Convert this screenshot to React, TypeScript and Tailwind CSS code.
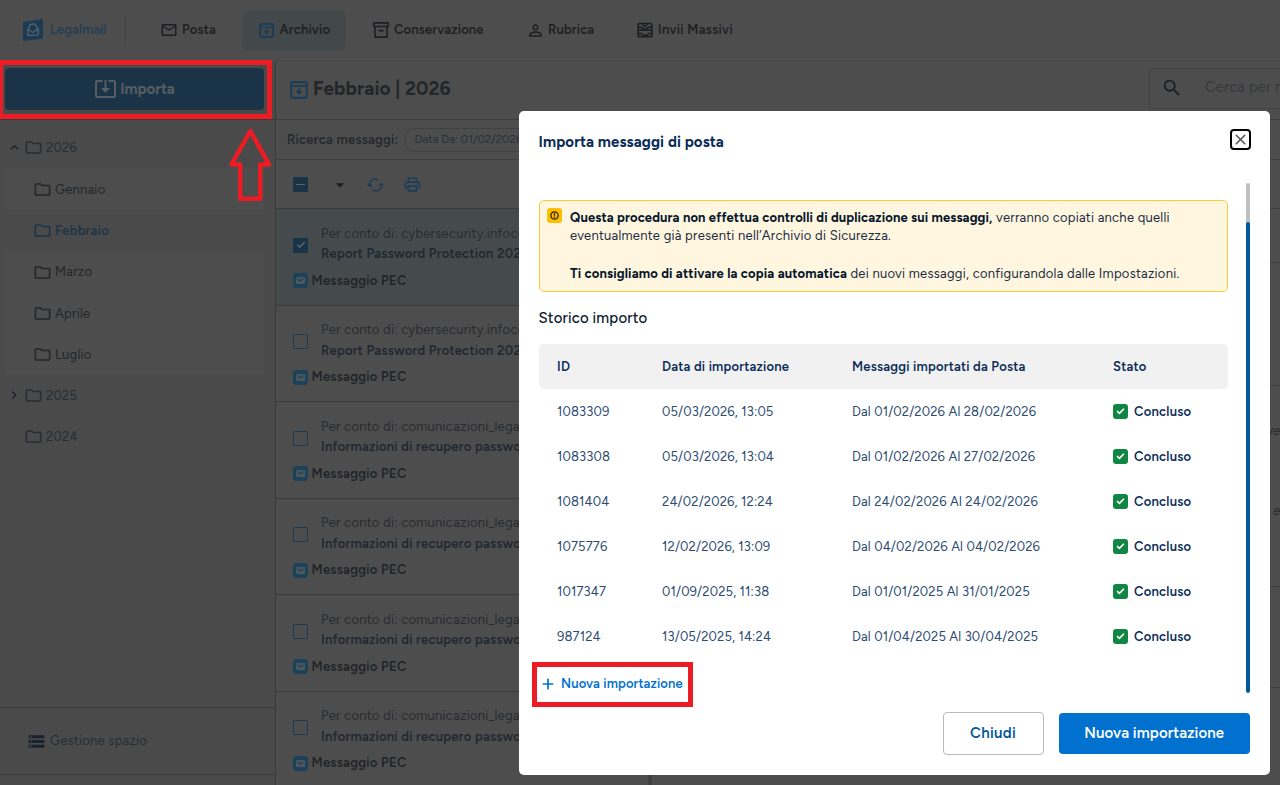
import { Check, Plus, X } from "lucide-react";
import {
  MdArrowDropDown,
  MdExpandLess,
  MdChevronRight,
  MdOutlineFolder,
  MdOutlineMail,
  MdOutlinePrint,
  MdPersonOutline,
  MdSearch,
  MdStorage,
} from "react-icons/md";

const months = ["Gennaio", "Febbraio", "Marzo", "Aprile", "Luglio"];

const cyber = { from: "cybersecurity.infocert", subject: "Report Password Protection 2026" };
const recovery = { from: "comunicazioni_legalmail", subject: "Informazioni di recupero password" };
const messages = [cyber, cyber, recovery, recovery, recovery, recovery];

const imports = [
  { id: "1083309", date: "05/03/2026, 13:05", range: "Dal 01/02/2026 Al 28/02/2026" },
  { id: "1083308", date: "05/03/2026, 13:04", range: "Dal 01/02/2026 Al 27/02/2026" },
  { id: "1081404", date: "24/02/2026, 12:24", range: "Dal 24/02/2026 Al 24/02/2026" },
  { id: "1075776", date: "12/02/2026, 13:09", range: "Dal 04/02/2026 Al 04/02/2026" },
  { id: "1017347", date: "01/09/2025, 11:38", range: "Dal 01/01/2025 Al 31/01/2025" },
  { id: "987124", date: "13/05/2025, 14:24", range: "Dal 01/04/2025 Al 30/04/2025" },
];

function ArchiveDownIcon({ className }: { className?: string }) {
  return (
    <svg viewBox="0 0 18 18" fill="none" stroke="currentColor" className={className}>
      <rect x="1.2" y="1.2" width="15.6" height="15.6" rx="1.8" strokeWidth="2.2" />
      <path d="M1.5 5h15" strokeWidth="1.8" />
      <path d="M9 7.2v4" strokeWidth="2.4" />
      <path d="M5.2 10h7.6L9 14z" fill="currentColor" stroke="none" />
    </svg>
  );
}

function BoxIcon() {
  return (
    <svg viewBox="0 0 16 16" fill="none" stroke="currentColor" strokeWidth="1.6" className="h-4 w-4">
      <path d="M.9.9h14.2v3.6H.9zM2 4.5v10.6h12V4.5M5.5 8.6h5" />
    </svg>
  );
}

function TrayIcon() {
  return (
    <svg viewBox="0 0 16 16" fill="none" stroke="currentColor" strokeWidth="1.7" strokeLinejoin="round" className="h-4 w-4">
      <rect x="1.2" y="1.5" width="13.6" height="13.2" rx="1" />
      <path d="M1 8.1h14" />
      <path d="M1.2 5.3h3.3l1.7 1.3h3.600l1.700-1.300h3.300M5 2l3 2.300L11 2" strokeWidth="1.5" />
      <path d="M1.2 11.5h3l1.800 1.700h4l1.800-1.700h3" strokeWidth="1.5" />
    </svg>
  );
}

function Logo() {
  return (
    <svg viewBox="0 0 20 24" className="h-6 w-5">
      <path d="M0 4 20 1v19.5L0 23z" fill="#1b3a54" />
      <g fill="none" stroke="#525d66" strokeWidth="1.4">
        <path d="M6.2 11V9.500c0-4.600 7.600-4.600 7.600 0V11" />
        <path d="M4.7 11.2v6.300l10.600-.6v-6.200l-5.300 3.800z" />
      </g>
    </svg>
  );
}

function ImportIcon() {
  return (
    <svg viewBox="0 0 21 18" fill="none" stroke="currentColor" strokeWidth="2" className="h-[18px] w-[21px]">
      <path d="M7.500 1H2a1 1 0 0 0-1 1v14a1 1 0 0 0 1 1h17a1 1 0 0 0 1-1V2a1 1 0 0 0-1-1h-5.500" />
      <path d="M10.500 0v9" />
      <path d="M6 8h9l-4.500 5z" fill="currentColor" stroke="none" />
    </svg>
  );
}

function RefreshIcon() {
  return (
    <svg viewBox="0 0 17 14" fill="none" stroke="currentColor" strokeWidth="1.6" className="h-3.5 w-[17px]">
      <path d="M2.8 8.500A5.600 5.600 0 0 1 11.500 2.300M14.200 5.500A5.600 5.600 0 0 1 5.500 11.700" />
      <path d="M0 6.2h5.600L2.800 9.400zM11.400 7.800H17l-2.800-3.200z" fill="currentColor" stroke="none" />
    </svg>
  );
}

function PecIcon() {
  return (
    <span className="flex h-[15px] w-[15px] shrink-0 items-center justify-center rounded-[3.5px] bg-[#1b4259]">
      <svg viewBox="0 0 9 7" className="h-[7px] w-[9px]">
        <rect width="9" height="7" rx="1" fill="#4d575d" />
        <path d="M1.500 1.800 4.500 4l3-2.200" stroke="#1b4259" fill="none" strokeWidth="1.200" />
      </svg>
    </span>
  );
}

function Header() {
  return (
    <header className="flex h-[61px] shrink-0 items-center border-b border-[#484848] text-[13px] font-semibold tracking-[0.17px] text-[#1d1f22]">
      <div className="ml-[23px] flex h-7 w-[103px] items-center gap-[7px] border-r border-[#3f4142] text-[#1e3d56]">
        <Logo />
        <span className="font-medium">Legalmail</span>
      </div>
      <nav className="flex items-center">
        <div className="ml-[34px] flex w-[82px] items-center gap-1">
          <MdOutlineMail className="h-[18px] w-[18px]" />
          Posta
        </div>
        <div className="flex h-[41px] w-[104px] items-center gap-[5.5px] rounded-lg bg-[#43484a] pl-[17px]">
          <ArchiveDownIcon className="h-[15px] w-[15px] text-[#1c3d56]" />
          Archivio
        </div>
        <div className="ml-[27px] flex w-[155px] items-center gap-[5px]">
          <BoxIcon />
          Conservazione
        </div>
        <div className="flex w-[109px] items-center gap-[3px]">
          <MdPersonOutline className="-ml-0.5 h-[19px] w-[19px]" />
          Rubrica
        </div>
        <div className="flex items-center gap-[5px] tracking-[0.3px]">
          <TrayIcon />
          Invii Massivi
        </div>
      </nav>
    </header>
  );
}

function Sidebar() {
  return (
    <aside className="flex w-[276px] shrink-0 flex-col border-r border-[#3a3a3a] bg-[#4a4a4a] text-[13px] tracking-[0.25px] text-[#262d35]">
      <div className="h-[59px] shrink-0 border-b border-[#3a3a3a] pl-[5px] pt-[7px]">
        <button className="flex h-[42px] w-[259px] items-center justify-center gap-1 rounded bg-[#1b3347] pl-px text-[15px] font-bold tracking-normal text-[#565d63]">
          <ImportIcon />
          Importa
        </button>
      </div>
      <div className="flex grow flex-col pt-[7px]">
        <div className="flex h-[41.4px] items-center pl-1.5">
          <MdExpandLess className="h-[17px] w-[17px] text-[#1e2327]" />
          <MdOutlineFolder className="ml-px mr-[3px] h-[19px] w-[19px]" />
          2026
        </div>
        <div className="ml-[5px] w-[259px] bg-[#4d4d4d] text-[#222629]">
          {months.map((month) => (
            <div
              key={month}
              className={
                month === "Febbraio"
                  ? "flex h-[41.3px] items-center bg-[#4a4a4a] pl-7 pt-px font-semibold text-[#1d3447]"
                  : "flex h-[41.3px] items-center pl-7 pt-px"
              }
            >
              <MdOutlineFolder className="mr-[3px] h-[19px] w-[19px]" />
              {month}
            </div>
          ))}
        </div>
        <div className="flex h-[41px] items-center pl-1.5">
          <MdChevronRight className="h-[18px] w-4 text-[#15202b]" />
          <MdOutlineFolder className="ml-[2px] mr-[3px] h-[19px] w-[19px]" />
          2025
        </div>
        <div className="flex h-[41px] items-center pl-6">
          <MdOutlineFolder className="mr-[3px] h-[19px] w-[19px]" />
          2024
        </div>
      </div>
      <div className="flex h-[68px] items-center border-y border-[#3c3c3c] pl-[27px]">
        <MdStorage className="mr-1 h-[19px] w-[19px] text-[#17222e]" />
        Gestione spazio
      </div>
      <div className="h-2.5" />
    </aside>
  );
}

function MessageList() {
  return (
    <section className="w-[372px] shrink-0">
      <div className="flex h-10 items-center whitespace-nowrap border-b border-[#3e3e3e] pl-[11px] text-[13px] font-semibold tracking-[0.25px] text-[#25282c]">
        Ricerca messaggi:
        <span className="ml-[7px] flex h-6 items-center rounded-lg border border-[#414141] px-2 text-[11.5px] font-normal tracking-normal text-[#292f36]">
          Data Da: 01/02/2026
        </span>
      </div>
      <div className="flex h-[49px] items-center border-b border-[#3a3a3a] pl-[17px] pt-px text-[#1b3d57]">
        <span className="flex h-[15px] w-[15px] items-center justify-center rounded-[1px] bg-[#1b3347]">
          <span className="h-[1.5px] w-[9px] bg-[#5b6369]" />
        </span>
        <MdArrowDropDown className="ml-[22px] h-5 w-5 text-[#1c1e20]" />
        <span className="ml-[17px]">
          <RefreshIcon />
        </span>
        <MdOutlinePrint className="ml-[19px] h-[19px] w-[19px]" />
      </div>
      {messages.map((message, index) => (
        <article
          key={index}
          className={
            index === 0
              ? "h-[96.6px] border-b border-[#393b3c] bg-[#454b4c] pl-[17px] pt-[14.5px]"
              : "h-[96.6px] border-b border-[#393939] pl-[17px] pt-[14.5px]"
          }
        >
          <div className="flex items-center gap-[13px]">
            {index === 0 ? (
              <span className="mt-0.5 flex h-[15px] w-[15px] shrink-0 items-center justify-center rounded-[1px] bg-[#1b3347] text-[#667078]">
                <Check className="h-2.5 w-2.5" strokeWidth={3} />
              </span>
            ) : (
              <span className="mt-0.5 h-[15px] w-[15px] shrink-0 rounded-[1px] border border-[#1e3b51]" />
            )}
            <div className="w-[310px] overflow-hidden whitespace-nowrap text-[13px] leading-[20.5px] tracking-[0.25px]">
              <p className="text-[#282b2f]">Per conto di: {message.from}</p>
              <p className="font-semibold text-[#1f2730]">{message.subject}</p>
            </div>
          </div>
          <div className="mt-[6px] flex items-center gap-[3.5px] text-[13px] font-semibold leading-5 tracking-[0.3px] text-[#202327]">
            <PecIcon />
            Messaggio PEC
          </div>
        </article>
      ))}
    </section>
  );
}

function ImportDialog() {
  return (
    <div className="absolute left-[519px] top-[111px] flex h-[664px] w-[750.5px] flex-col rounded-[5px] bg-white pl-[19.5px] pr-[19.5px]">
      <div className="flex h-[72px] shrink-0 items-start justify-between pt-[18px]">
        <h2 className="pt-[3px] text-[15px] font-bold leading-5 tracking-[0.13px] text-[#0a2c57]">
          Importa messaggi di posta
        </h2>
        <button className="-mr-px flex h-[21px] w-[21px] items-center justify-center rounded border-2 border-black text-[#555]">
          <X className="h-[17px] w-[17px] shrink-0" strokeWidth={2.2} />
        </button>
      </div>
      <div className="flex h-[510px] shrink-0 justify-between">
        <div className="w-[689px]">
          <div className="mt-[17px] flex h-[92px] gap-2 rounded-[5px] border border-[#ffc93c] bg-[#fff6e0] pl-[7px] pt-[7px]">
            <span className="flex h-[15px] w-[15px] shrink-0 items-center justify-center rounded-[3px] bg-[#ffbe00]">
              <svg viewBox="0 0 9 9" fill="none" stroke="#2b2200" className="h-[9px] w-[9px]">
                <circle cx="4.5" cy="4.5" r="3.7" strokeWidth="1.3" />
                <path d="M4.5 2.3v2.4M4.5 5.5v1.2" strokeWidth="1.3" />
              </svg>
            </span>
            <div className="whitespace-nowrap pl-[0.5px] pt-[0.5px] text-[13px] leading-[18.7px] tracking-[0.25px] text-[#1b2c40]">
              <p>
                <strong className="tracking-[0.13px] text-[#07172b]">
                  Questa procedura non effettua controlli di duplicazione sui messaggi,
                </strong>{" "}
                verranno copiati anche quelli
              </p>
              <p>eventualmente già presenti nell’Archivio di Sicurezza.</p>
              <p className="mt-[18.7px]">
                <strong className="tracking-[0.15px] text-[#07172b]">
                  Ti consigliamo di attivare la copia automatica
                </strong>{" "}
                dei nuovi messaggi, configurandola dalle Impostazioni.
              </p>
            </div>
          </div>
          <h3 className="mt-4 text-[15px] font-medium leading-5 tracking-[0.15px] text-[#0b1a2e]">Storico importo</h3>
          <div className="mt-4 grid h-[45px] grid-cols-[105px_190px_261px_1fr] items-center rounded-[5px] bg-[#f1f1f1] pl-[18.5px] text-[13px] font-semibold tracking-[0.22px] text-[#0a2c57]">
            <span>ID</span>
            <span>Data di importazione</span>
            <span>Messaggi importati da Posta</span>
            <span>Stato</span>
          </div>
          {imports.map((row) => (
            <div
              key={row.id}
              className="grid h-[45px] grid-cols-[105px_190px_261px_1fr] items-center pl-[18.5px] text-[13px] tracking-[0.13px] text-[#2a4a70]"
            >
              <span>{row.id}</span>
              <span>{row.date}</span>
              <span>{row.range}</span>
              <span className="flex items-center gap-1.5 font-semibold tracking-[0.25px] text-[#0a2c57]">
                <span className="flex h-[15px] w-[15px] items-center justify-center rounded-[3px] bg-[#0f8742] text-white">
                  <Check className="h-[9px] w-[9px]" strokeWidth={4.5} />
                </span>
                Concluso
              </span>
            </div>
          ))}
          <button className="-ml-[6.5px] mt-[3px] flex h-[45px] w-[160.5px] items-center gap-[5px] whitespace-nowrap border-[5px] border-[#ed1c24] pb-0.5 pl-[3px] text-[13px] font-semibold tracking-[0.13px] text-[#0071cf]">
            <Plus className="h-4 w-4" strokeWidth={2.5} />
            Nuova importazione
          </button>
        </div>
        <div className="flex w-1 flex-col overflow-hidden rounded-sm bg-[#bfbfbf] pt-[39px]">
          <div className="grow rounded-sm bg-[#00589f]" />
        </div>
      </div>
      <div className="mt-[19px] flex items-center justify-end gap-[15px] text-[15px] font-semibold tracking-[0.12px]">
        <button className="h-[43px] w-[101px] rounded border border-[#b9b9b9] tracking-[0.3px] text-[#00569c]">
          Chiudi
        </button>
        <button className="h-[41px] w-[191.5px] rounded bg-[#0071cf] text-white">Nuova importazione</button>
      </div>
    </div>
  );
}

export default function App() {
  return (
    <div className="relative flex h-[785px] w-[1280px] flex-col overflow-hidden bg-[#4d4d4d] font-['Figtree','Inter',sans-serif]">
      <Header />
      <div className="flex min-h-0 grow">
        <Sidebar />
        <main className="flex min-w-0 grow flex-col">
          <div className="flex h-[59px] shrink-0 items-center border-b border-[#3e3e3e] pl-[14px]">
            <ArchiveDownIcon className="mb-px h-[18px] w-[18px] text-[#1c3d56]" />
            <h1 className="mb-px ml-[5px] text-[19px] font-bold tracking-[0.1px] text-[#222529]">Febbraio | 2026</h1>
            <div className="mb-1 ml-auto flex h-[41px] w-[131px] items-center overflow-hidden whitespace-nowrap rounded-l border border-r-0 border-[#424242] pl-[11px] text-[14.5px] tracking-[0.3px] text-[#35383b]">
              <MdSearch className="mr-[22px] h-[22px] w-[22px] shrink-0 text-[#15202b]" />
              Cerca per mittente
            </div>
          </div>
          <div className="flex min-h-0 grow">
            <MessageList />
            <div className="w-1 shrink-0 bg-[#414141]" />
            <div className="grow">
              <div className="h-10 border-b border-[#3e3e3e]" />
              <div className="h-[49px] border-b border-[#3e3e3e]" />
              <div className="h-[54px] border-b border-[#3e3e3e]" />
              <div className="h-[123px] border-b border-[#3e3e3e]" />
              <div className="flex h-[201px] flex-col items-end border-b border-[#3e3e3e] text-[12.5px] italic leading-[18px] text-[#25282c]">
                <span className="mt-9">ve</span>
                <span className="mt-[62px]">a e</span>
              </div>
              <div className="h-[101px] border-b border-[#3e3e3e]" />
            </div>
          </div>
        </main>
      </div>

      <ImportDialog />

      {/* Highlight around the import button, with its arrow */}
      <div className="pointer-events-none absolute -left-0.5 top-[60px] h-[59px] w-[274px] border-[5px] border-[#ed1c24]" />
      <svg viewBox="0 0 44 74" className="absolute left-[228px] top-[128px] h-[74px] w-11">
        <path d="M22.3 3 41 36.5H32.2V70.7H12.2V36.5H3.5z" fill="none" stroke="#ed1c24" strokeWidth="4.5" strokeLinejoin="round" />
      </svg>
    </div>
  );
}
